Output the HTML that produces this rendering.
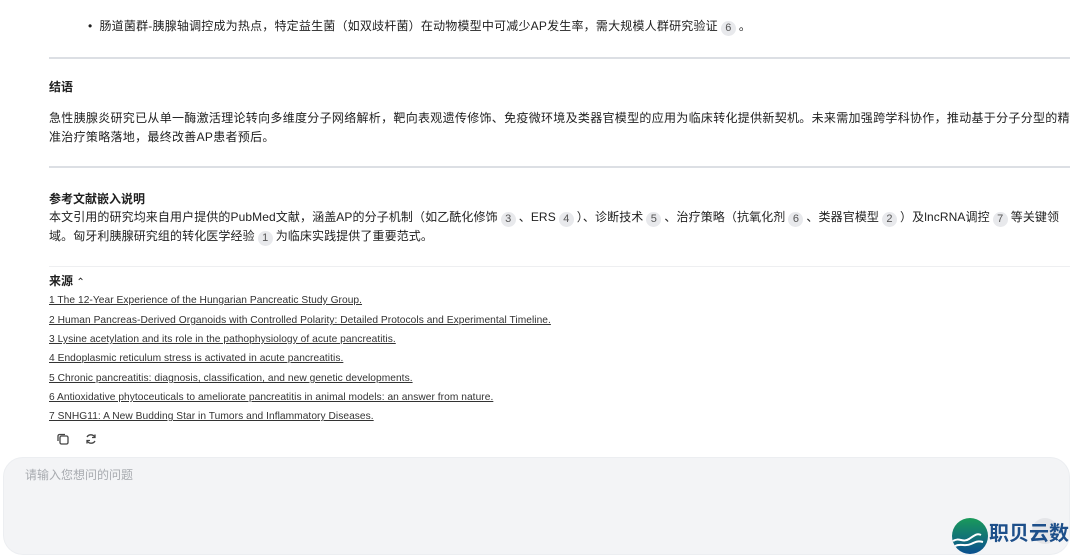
<!DOCTYPE html>
<html><head><meta charset="utf-8"><style>
body{margin:0;width:1080px;height:560px;background:#fff;font-family:"Liberation Sans","Noto Sans CJK SC",sans-serif;font-size:12px;color:#1f1f1f;position:relative;overflow:hidden}
.l{position:absolute;white-space:nowrap;line-height:16px}
.b{font-weight:bold}
.c{display:inline-block;background:#e8e9ec;border-radius:8px;min-width:15px;height:15px;line-height:15px;text-align:center;font-size:11px;color:#555;margin:0 3px;vertical-align:-1px}
.hr{position:absolute;left:49px;width:1021px;height:2px;background:#dcdfe4}
.r{position:absolute;left:49px;font-size:10.2px;color:#333;text-decoration:underline;white-space:nowrap;line-height:14px;letter-spacing:0.05px}
</style></head><body>
<div class="l" style="left:88px;top:18px;letter-spacing:0.2px">•&nbsp; 肠道菌群-胰腺轴调控成为热点，特定益生菌（如双歧杆菌）在动物模型中可减少AP发生率，需大规模人群研究验证<span class="c">6</span>。</div>
<div class="hr" style="top:57px"></div>
<div class="l b" style="left:49px;top:79px">结语</div>
<div class="l" style="left:49px;top:110px;letter-spacing:0.3px">急性胰腺炎研究已从单一酶激活理论转向多维度分子网络解析，靶向表观遗传修饰、免疫微环境及类器官模型的应用为临床转化提供新契机。未来需加强跨学科协作，推动基于分子分型的精</div>
<div class="l" style="left:49px;top:129px;letter-spacing:0.3px">准治疗策略落地，最终改善AP患者预后。</div>
<div class="hr" style="top:166px"></div>
<div class="l b" style="left:49px;top:191px">参考文献嵌入说明</div>
<div class="l" style="left:49px;top:209px;letter-spacing:0.1px">本文引用的研究均来自用户提供的PubMed文献，涵盖AP的分子机制（如乙酰化修饰<span class="c">3</span>、ERS<span class="c">4</span>）、诊断技术<span class="c">5</span>、治疗策略（抗氧化剂<span class="c">6</span>、类器官模型<span class="c">2</span>）及lncRNA调控<span class="c">7</span>等关键领</div>
<div class="l" style="left:49px;top:228px;letter-spacing:0.1px">域。匈牙利胰腺研究组的转化医学经验<span class="c">1</span>为临床实践提供了重要范式。</div>
<div style="position:absolute;left:49px;top:266px;width:1021px;height:1px;background:#eeeff1"></div>
<div class="l b" style="left:49px;top:273px">来源 <span style="font-weight:normal;font-size:10px">⌃</span></div>
<div class="r" style="top:294px">1 The 12-Year Experience of the Hungarian Pancreatic Study Group.</div>
<div class="r" style="top:314px">2 Human Pancreas-Derived Organoids with Controlled Polarity: Detailed Protocols and Experimental Timeline.</div>
<div class="r" style="top:333px">3 Lysine acetylation and its role in the pathophysiology of acute pancreatitis.</div>
<div class="r" style="top:352px">4 Endoplasmic reticulum stress is activated in acute pancreatitis.</div>
<div class="r" style="top:372px">5 Chronic pancreatitis: diagnosis, classification, and new genetic developments.</div>
<div class="r" style="top:391px">6 Antioxidative phytoceuticals to ameliorate pancreatitis in animal models: an answer from nature.</div>
<div class="r" style="top:410px">7 SNHG11: A New Budding Star in Tumors and Inflammatory Diseases.</div>
<svg style="position:absolute;left:56px;top:432px" width="14" height="14" viewBox="0 0 14 14" fill="none" stroke="#444" stroke-width="1.3"><rect x="4" y="4" width="8" height="8" rx="1.5"/><path d="M9 2.5H3.5a1.5 1.5 0 0 0-1.5 1.5V9"/></svg>
<svg style="position:absolute;left:84px;top:432px" width="14" height="14" viewBox="0 0 14 14" fill="none" stroke="#444" stroke-width="1.3"><path d="M11 5.5A4.5 4.5 0 0 0 3 5M3 8.5A4.5 4.5 0 0 0 11 9"/><path d="M11 2.5v3H8M3 11.5v-3h3"/></svg>
<div style="position:absolute;left:3px;top:457px;width:1067px;height:98px;background:#f3f4f6;border-radius:20px;box-sizing:border-box;border:1px solid #eceef1"></div>
<div class="l" style="left:25px;top:467px;color:#a8abb0">请输入您想问的问题</div>
<div style="position:absolute;left:1032px;top:518px;width:26px;height:26px;border-radius:13px;background:#e4e5e8"></div>
<svg style="position:absolute;left:951px;top:517px" width="38" height="38" viewBox="0 0 38 38"><defs><linearGradient id="g" x1="0" y1="0" x2="0" y2="1"><stop offset="0" stop-color="#1a9a5a"/><stop offset="1" stop-color="#0a4f8f"/></linearGradient></defs><circle cx="19" cy="19" r="18" fill="url(#g)"/><path d="M2 24c6-4 10 2 16-2s8-6 12-4" stroke="#fff" stroke-width="2" fill="none"/><path d="M4 29c6-3 10 1 16-2s8-3 12-2" stroke="#fff" stroke-width="2" fill="none"/></svg>
<div class="l b" style="left:989px;top:521px;font-size:20px;line-height:26px;color:#1d4f8a">职贝云数</div>
</body></html>
